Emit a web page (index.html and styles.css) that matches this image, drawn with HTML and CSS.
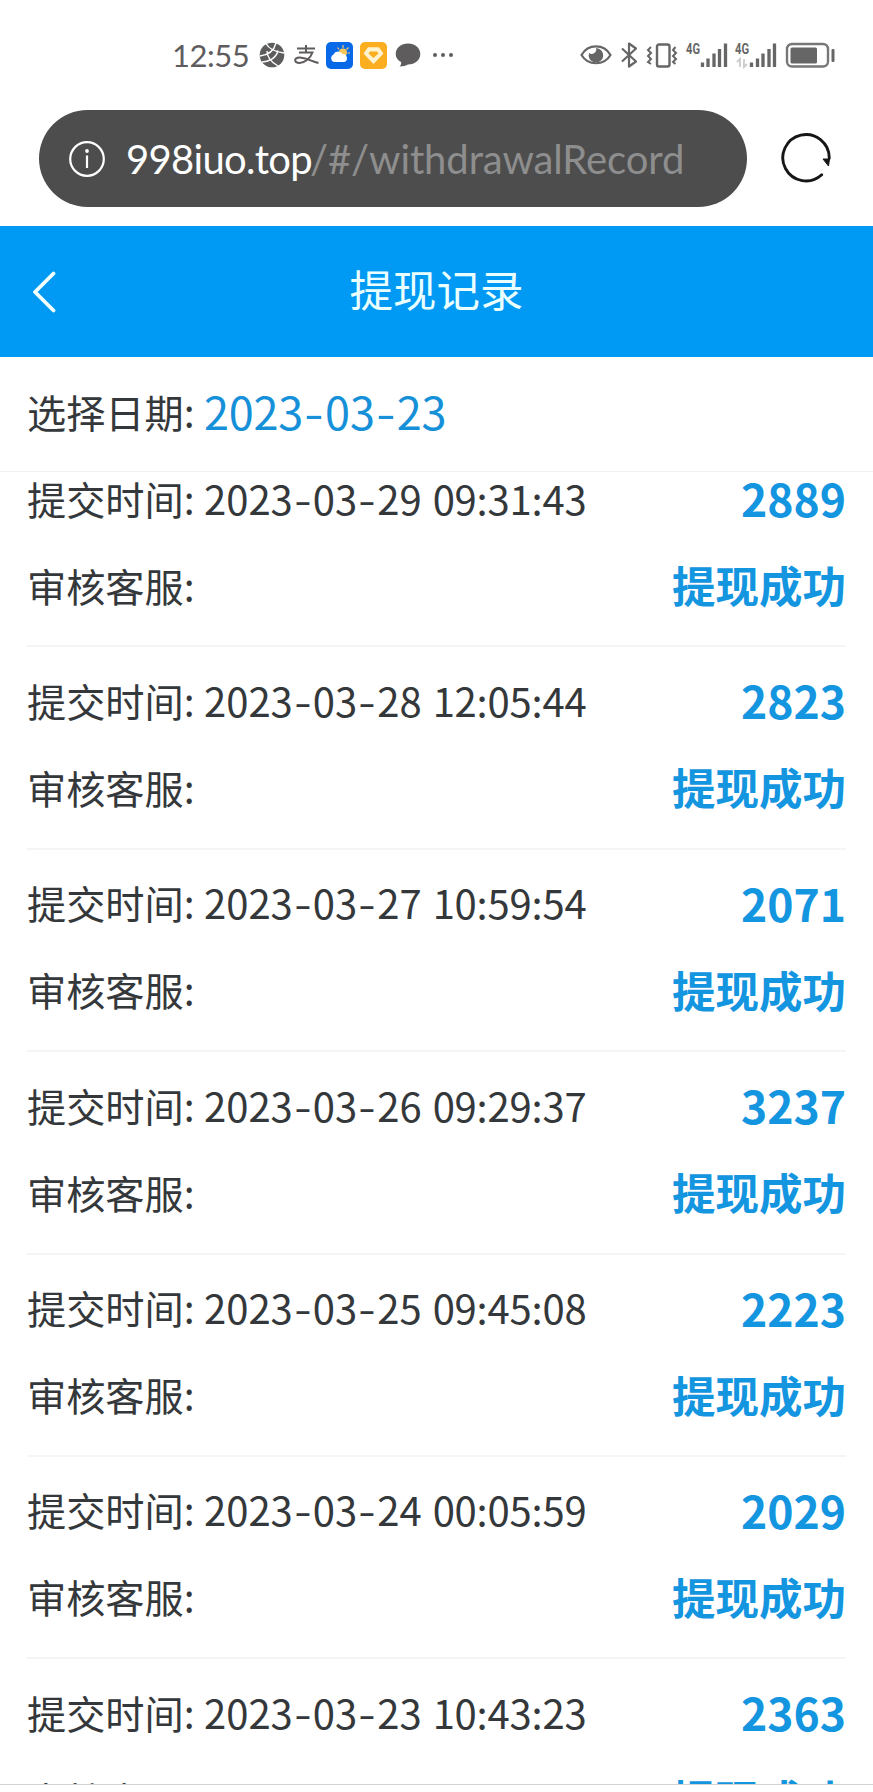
FILE: index.html
```html
<!DOCTYPE html>
<html lang="zh-CN">
  <head>
    <meta charset="UTF-8" />
    <meta name="viewport" content="width=device-width, initial-scale=1.0" />
    <title>提现记录</title>
    <link rel="stylesheet" href="styles.css">
  </head>
  <body>
    <!-- Status Bar -->
    <div class="status-bar">
      <div class="status-left">
        <span class="clock">12:55</span>
        <svg class="icon-globe" width="26" height="26" viewBox="0 0 26 26">
          <circle cx="13" cy="13" r="12.3" fill="#5f5c5e" />
          <path d="M7 1.500C10 7 16 10 25 11M1 14C9 13 15 9 17 1M8 9C8 15 12 20 19 24M3 20C9 20 17 17 19 8.500" fill="none" stroke="#fff" stroke-width="1.4" />
        </svg>
        <svg class="icon-pay" width="26" height="20" viewBox="0 0 26 20">
          <path d="M3 3.5H21M12 0V7.5M5 7.5H18.5C16.5 13 11 18 5.5 18C-0.5 18 0 12.5 5.5 12.5C11 12.5 17 16 24.5 18" fill="none" stroke="#5f5c5e" stroke-width="2" />
        </svg>
        <svg class="icon-weather" width="27" height="27" viewBox="0 0 27 27">
          <rect width="27" height="27" rx="5" fill="#0869e8" />
          <path d="M17 3V6M11.5 5.5L13 7.5M22.500 5.500L20.500 7.500M21.500 11H24" stroke="#f3c66a" stroke-width="1.200" />
          <circle cx="17" cy="10.500" r="4" fill="#f7c75a" />
          <path d="M8 20A4 4 0 0 1 7.500 12.500A5 5 0 0 1 16.500 12A4.200 4.200 0 0 1 18.500 20Z" fill="#fff" />
        </svg>
        <svg class="icon-gem" width="27" height="27" viewBox="0 0 27 27">
          <rect width="27" height="27" rx="5" fill="#fbae20" />
          <path d="M8.500 6H18.500L22.500 11.500L13.500 21L4.500 11.500Z" fill="#fff3d0" stroke="#fff3d0" stroke-width="1.500" stroke-linejoin="round" />
          <path d="M10 9.500H17L18.500 11.500L13.500 16L8.500 11.500Z" fill="#fbae20" />
        </svg>
        <svg class="icon-chat" width="26" height="24" viewBox="0 0 26 24">
          <path d="M13 0.500C20 0.500 25.300 5 25.300 11C25.300 17 20 21.500 13 21.500C11 22.700 8 23.500 4.500 23.500C6 22 6.500 20.500 6 19C2.500 17 0.700 14.500 0.700 11C0.700 5 6 0.500 13 0.500Z" fill="#5f5c5e" />
        </svg>
        <svg class="icon-more" width="22" height="6" viewBox="0 0 22 6">
          <g fill="#5f5c5e"><circle cx="3" cy="3" r="2" /><circle cx="11" cy="3" r="2" /><circle cx="19" cy="3" r="2" /></g>
        </svg>
      </div>

      <svg class="status-right" width="256" height="30" viewBox="0 0 256 30">
        <!-- Eye -->
        <path d="M1.500 15C8 3.500 24 3.500 30.500 15C24 26 8 26 1.500 15Z" fill="none" stroke="#666" stroke-width="2.200" />
        <path d="M16 8A7.300 7.300 0 1 1 9 13A4.500 4.500 0 0 0 16 8Z" fill="#666" />
        <!-- Bluetooth -->
        <path d="M42 8.500L56 21.500L49 26.500V3.500L56 8.500L42 21.500" fill="none" stroke="#666" stroke-width="2.200" stroke-linejoin="round" />
        <!-- Vibrate -->
        <rect x="77" y="4.500" width="12.500" height="22" rx="2" fill="none" stroke="#666" stroke-width="2.400" />
        <path d="M71 7L68 10L71 13L68 16L71 19L68 22L71 24M95.500 7L93 10L96 13L93 16L96 19L93 22L95.500 24" fill="none" stroke="#666" stroke-width="2" />
        <!-- Signal 1 -->
        <text class="net" x="106" y="14" textLength="14" lengthAdjust="spacingAndGlyphs">4G</text>
        <path d="M122.500 22.500V27M128 18.500V27M134 13.500V27M139.500 9V27M145.500 3.500V27" stroke="#666" stroke-width="3.300" />
        <!-- Signal 2 -->
        <text class="net" x="155" y="14" textLength="14" lengthAdjust="spacingAndGlyphs">4G</text>
        <path d="M157 22L160 19V27M164 19V27L167 24" fill="none" stroke="#ccc" stroke-width="1.800" />
        <path d="M171.500 22.500V27M177.500 18.500V27M183 13.500V27M189 9V27M194.500 3.500V27" stroke="#666" stroke-width="3.300" />
        <!-- Battery -->
        <rect x="207" y="4" width="41" height="22.500" rx="5" fill="none" stroke="#777" stroke-width="2.400" />
        <rect x="210.500" y="7.500" width="26.500" height="16" rx="1.500" fill="#666" />
        <rect x="251.500" y="9" width="3" height="13" rx="1" fill="#666" />
      </svg>
    </div>

    <!-- Address Bar -->
    <div class="address-bar">
      <div class="url-box">
        <svg width="36" height="36" viewBox="0 0 36 36">
          <circle cx="18" cy="18" r="16.800" fill="none" stroke="#fff" stroke-width="2.200" />
          <path d="M18 14.500V27" stroke="#fff" stroke-width="2.200" />
          <circle cx="18" cy="10" r="1.900" fill="#fff" />
        </svg>
        <span class="host">998iuo.top</span><span class="path">/#/withdrawalRecord</span>
      </div>
      <svg class="reload" width="52" height="52" viewBox="0 0 52 52">
        <path d="M41.700 42.800A23.200 23.200 0 1 1 49.200 26.500" fill="none" stroke="#161616" stroke-width="2.900" stroke-linecap="round" />
        <path d="M43 27H49.500L48.500 34Z" fill="#161616" stroke="#161616" stroke-linejoin="round" />
      </svg>
    </div>

    <!-- Page Header -->
    <div class="header">
      <svg class="back" width="24" height="42" viewBox="0 0 24 42">
        <path d="M21.500 2.500L3 21L21.500 39.500" fill="none" stroke="#f4ffff" stroke-width="3.800" stroke-linecap="round" stroke-linejoin="round" />
      </svg>
      <h1>提现记录</h1>
    </div>

    <div class="date-filter">
      <span class="label">选择日期:</span>
      <span class="date" id="selectedDate"></span>
    </div>

    <!-- Records will be added dynamically -->
    <div class="records" id="records"></div>

    <script>
      const records = [
        { date: "2023-03-29", time: "09:31:43", amount: 2889 },
        { date: "2023-03-28", time: "12:05:44", amount: 2823 },
        { date: "2023-03-27", time: "10:59:54", amount: 2071 },
        { date: "2023-03-26", time: "09:29:37", amount: 3237 },
        { date: "2023-03-25", time: "09:45:08", amount: 2223 },
        { date: "2023-03-24", time: "00:05:59", amount: 2029 },
        { date: "2023-03-23", time: "10:43:23", amount: 2363 },
      ];

      // Hyphens get their own element so they can be wider than the font's
      function formatDate(date) {
        return date.replace(/-/g, '<span class="dash">-</span>');
      }

      document.getElementById("selectedDate").innerHTML = formatDate("2023-03-23");

      document.getElementById("records").innerHTML = records
        .map(
          (record) => `
          <div class="record">
            <div class="line">
              <span class="label">提交时间:</span>
              <span class="date">${formatDate(record.date)}</span>
              <span class="time">${record.time}</span>
              <span class="amount">${record.amount}</span>
            </div>
            <div class="line">
              <span class="label">审核客服:</span>
              <span class="state">提现成功</span>
            </div>
          </div>`
        )
        .join("");
    </script>
  </body>
</html>
```
FILE: styles.css
```css
* {
  box-sizing: border-box;
}

body {
  display: flex;
  flex-direction: column;
  height: 1792px;
  margin: 0;
  overflow: hidden;
  background-color: #fff;
  color: #35383b;
  font-family: "Noto Sans CJK SC", sans-serif;
  white-space: nowrap;
}

svg {
  display: block;
  flex: none;
}

/* Status Bar */
.status-bar {
  display: flex;
  flex: none;
  align-items: center;
  justify-content: space-between;
  height: 110px;
  padding: 0 37px 0 172px;
}

.status-left {
  display: flex;
  align-items: center;
}

.clock {
  width: 87px;
  color: #5f5c5e;
  font-family: Lato, sans-serif;
  font-size: 31px;
  letter-spacing: -0.5px;
}

.icon-pay {
  margin-left: 9px;
}

.icon-weather {
  margin-left: 6px;
}

.icon-gem {
  margin-left: 7px;
}

.icon-chat {
  margin-left: 8px;
}

.icon-more {
  margin-left: 11px;
}

.net {
  fill: #666;
  font-family: Roboto, sans-serif;
  font-size: 14px;
  font-weight: bold;
}

/* Address Bar */
.address-bar {
  display: flex;
  flex: none;
  height: 116px;
}

.url-box {
  display: flex;
  align-items: center;
  width: 708px;
  height: 97px;
  margin-left: 39px;
  padding-left: 30px;
  border-radius: 49px;
  background-color: #4d4d4d;
  font-family: Lato, sans-serif;
  font-size: 40px;
}

.host {
  width: 184px;
  margin-left: 21px;
  color: #fff;
  letter-spacing: -0.7px;
}

.path {
  color: #8e8e8e;
  letter-spacing: -0.1px;
}

.reload {
  margin: 22px 0 0 33px;
}

/* Page Header */
.header {
  display: flex;
  flex: none;
  align-items: center;
  height: 131px;
  padding: 0 32px;
  background-color: #0099f3;
}

.header h1 {
  flex: 1;
  margin: 0 24px 6px 0;
  color: #eaffff;
  font-size: 43.5px;
  font-weight: normal;
  line-height: 60px;
  text-align: center;
}

.date-filter {
  display: flex;
  flex: none;
  align-items: center;
  height: 115px;
  padding: 0 0 7px 27px;
  border-bottom: 1px solid #f0f0f0;
}

.label {
  width: 177px;
  font-size: 39.2px;
}

.date {
  display: flex;
}

.dash {
  width: 20px;
  text-align: center;
  transform: scaleX(1.25);
}

.date-filter .date {
  color: #1690d8;
  font-size: 45px;
  letter-spacing: -0.2px;
}

.date-filter .dash {
  width: 22px;
}

/* Records */
.records {
  flex: none;
  height: 1313px;
  padding: 0 27px;
  overflow: hidden;
  border-bottom: 1px solid #d2d2d2;
}

.record {
  height: 202.4px;
  padding-top: 9px;
  border-bottom: 2px solid #f5f5f5;
}

.record:first-child {
  margin-top: -27px;
}

.line {
  display: flex;
  align-items: center;
  height: 87px;
}

.line .date,
.line .time {
  font-size: 40px;
}

.line .time {
  margin-left: 11px;
  letter-spacing: -0.2px;
}

.amount,
.state {
  margin-left: auto;
  color: #1495df;
  font-weight: bold;
}

.amount {
  font-size: 44.5px;
}

.state {
  font-size: 43.5px;
}
```
